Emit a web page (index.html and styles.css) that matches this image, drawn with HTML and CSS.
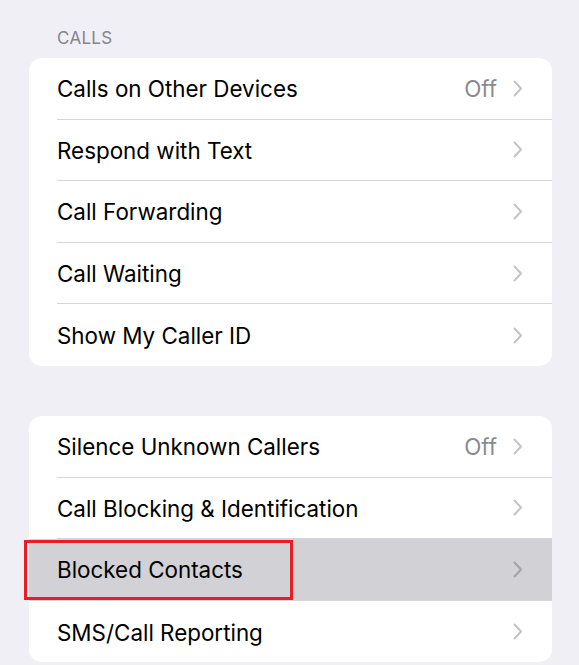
FILE: index.html
```html
<!DOCTYPE html>
<html lang="en">
<head>
<meta charset="UTF-8">
<title>Phone</title>
<link rel="stylesheet" href="styles.css">
</head>
<body>

<div class="page">

    <div class="section-title">CALLS</div>

    <!-- calls group -->
    <div class="group">
        <div class="row">
            <div class="row-inner">
                <span class="label">Calls on Other Devices</span>
                <span class="value">Off</span>
                <svg class="chev" viewBox="0 0 10 17"><path d="M1.5 1.5 L8 8.5 L1.5 15.5"/></svg>
            </div>
        </div>
        <div class="row">
            <div class="row-inner">
                <span class="label">Respond with Text</span>
                <svg class="chev" viewBox="0 0 10 17"><path d="M1.5 1.5 L8 8.5 L1.5 15.5"/></svg>
            </div>
        </div>
        <div class="row">
            <div class="row-inner">
                <span class="label">Call Forwarding</span>
                <svg class="chev" viewBox="0 0 10 17"><path d="M1.5 1.5 L8 8.5 L1.5 15.5"/></svg>
            </div>
        </div>
        <div class="row">
            <div class="row-inner">
                <span class="label">Call Waiting</span>
                <svg class="chev" viewBox="0 0 10 17"><path d="M1.5 1.5 L8 8.5 L1.5 15.5"/></svg>
            </div>
        </div>
        <div class="row">
            <div class="row-inner">
                <span class="label">Show My Caller ID</span>
                <svg class="chev" viewBox="0 0 10 17"><path d="M1.5 1.5 L8 8.5 L1.5 15.5"/></svg>
            </div>
        </div>
    </div>

    <!-- blocking group -->
    <div class="group">
        <div class="row">
            <div class="row-inner">
                <span class="label">Silence Unknown Callers</span>
                <span class="value">Off</span>
                <svg class="chev" viewBox="0 0 10 17"><path d="M1.5 1.5 L8 8.5 L1.5 15.5"/></svg>
            </div>
        </div>
        <div class="row">
            <div class="row-inner">
                <span class="label">Call Blocking &amp; Identification</span>
                <svg class="chev" viewBox="0 0 10 17"><path d="M1.5 1.5 L8 8.5 L1.5 15.5"/></svg>
            </div>
        </div>
        <div class="row pressed">
            <div class="row-inner">
                <span class="label">Blocked Contacts</span>
                <svg class="chev" viewBox="0 0 10 17"><path d="M1.5 1.5 L8 8.5 L1.5 15.5"/></svg>
            </div>
            <div class="mark"></div>
        </div>
        <div class="row">
            <div class="row-inner">
                <span class="label">SMS/Call Reporting</span>
                <svg class="chev" viewBox="0 0 10 17"><path d="M1.5 1.5 L8 8.5 L1.5 15.5"/></svg>
            </div>
        </div>
    </div>

</div>

</body>
</html>
```

FILE: styles.css
```css
body {
    margin: 0;
    background: #f0eff5;
    font-family: Inter, "Noto Sans", sans-serif;
    color: #000;
}

.page {
    padding: 27px 27px 0 29px;
}

/* section header */
.section-title {
    padding-left: 28px;
    font-size: 17px;
    letter-spacing: 0.3px;
    color: #85858a;
    line-height: 22px;
    margin-bottom: 9px;
}

/* grouped card */
.group {
    background: #fff;
    border-radius: 13px;
}

.group + .group {
    margin-top: 50px;
}

.row {
    position: relative;
    padding-left: 28px;
}

.row:first-child { border-radius: 13px 13px 0 0; }
.row:last-child  { border-radius: 0 0 13px 13px; }

.row-inner {
    display: flex;
    align-items: center;
    height: 61.6px;
    box-sizing: border-box;
    border-bottom: 1px solid #d6d6da;
    padding-right: 29px;
}

.row:last-child .row-inner {
    border-bottom: none;
}

.label {
    flex: 1;
    font-size: 22.4px;
    padding-top: 1px;
}

.value {
    font-size: 22.4px;
    padding-top: 1px;
    color: #8a8a8e;
    margin-right: 16px;
}

.chev {
    width: 10px;
    height: 17px;
    fill: none;
    stroke: #c4c4c7;
    stroke-width: 2;
    stroke-linecap: round;
    stroke-linejoin: round;
}

/* pressed row */
.pressed {
    background: #d1d1d6;
}

.pressed .chev {
    stroke: #a2a2a7;
}

/* red annotation box */
.mark {
    position: absolute;
    left: -5px;
    top: 1px;
    width: 269px;
    height: 60px;
    border: 3px solid #ec1c24;
    box-sizing: border-box;
}
```
